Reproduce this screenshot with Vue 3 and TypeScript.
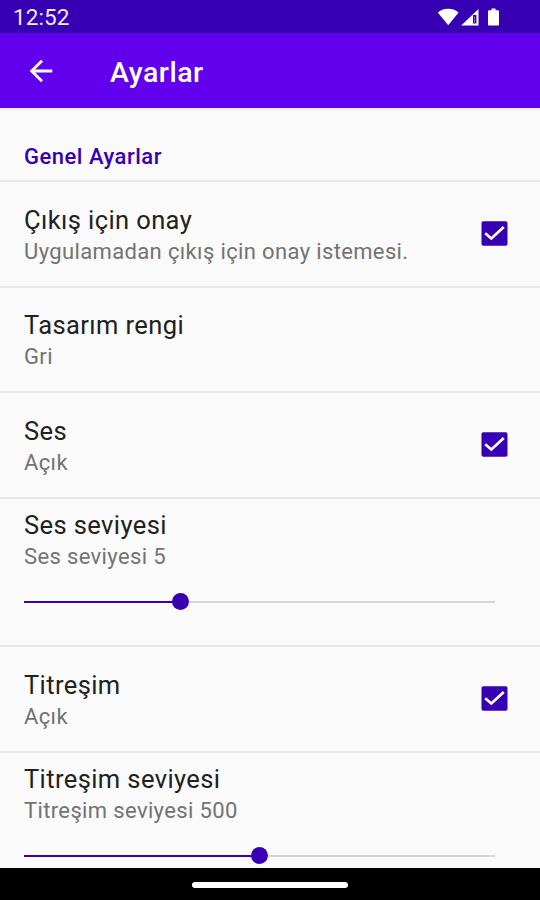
<script setup lang="ts">
import { ref } from 'vue'

interface Setting {
  id: string
  title: string
  summary: string
  kind: 'check' | 'plain' | 'slider'
  checked?: boolean
  percent?: number
}

const settings = ref<Setting[]>([
  { id: 'exit', title: 'Çıkış için onay', summary: 'Uygulamadan çıkış için onay istemesi.', kind: 'check', checked: true },
  { id: 'color', title: 'Tasarım rengi', summary: 'Gri', kind: 'plain' },
  { id: 'sound', title: 'Ses', summary: 'Açık', kind: 'check', checked: true },
  { id: 'volume', title: 'Ses seviyesi', summary: 'Ses seviyesi 5', kind: 'slider', percent: 33.3 },
  { id: 'vibration', title: 'Titreşim', summary: 'Açık', kind: 'check', checked: true },
  { id: 'strength', title: 'Titreşim seviyesi', summary: 'Titreşim seviyesi 500', kind: 'slider', percent: 50 },
])

function toggle(item: Setting) {
  if (item.kind === 'check') item.checked = !item.checked
}
</script>

<template>
  <div class="screen">
    <div class="status">
      <span class="clock">12:52</span>
      <svg class="status-icons" width="64" height="20" viewBox="0 0 64 20">
        <path d="M0.800 4.400C4 1.700 7.500 0.800 11.200 0.800S18.400 1.700 21.600 4.400L11.200 17.300Z" fill="#fff" />
        <path d="M41.500 1V17.600H24.200Z" fill="#fff" />
        <path d="M36 7H39.400V15.500H36Z" fill="#3700b3" />
        <path d="M37.500 8.500V14.800" stroke="#9c84dc" stroke-width="0.800" />
        <path d="M54.500 0.500H58.500V2.200H61Q62 2.200 62 3.200V16.600Q62 17.600 61 17.600H52Q51 17.600 51 16.600V3.200Q51 2.200 52 2.200H54.500Z" fill="#fff" />
      </svg>
    </div>
    <header class="appbar">
      <svg class="back" width="34" height="34" viewBox="0 0 24 24">
        <path d="M20 11H7.830l5.590-5.590L12 4l-8 8 8 8 1.410-1.410L7.830 13H20v-2z" fill="#fff" />
      </svg>
      <h1>Ayarlar</h1>
    </header>
    <main class="list">
      <h2 class="category">Genel Ayarlar</h2>
      <section v-for="item in settings" :key="item.id" class="row" :class="item.kind" @click="toggle(item)">
        <div class="texts">
          <div class="title">{{ item.title }}</div>
          <div class="summary">{{ item.summary }}</div>
        </div>
        <svg v-if="item.kind === 'check'" class="box" width="27" height="25" viewBox="0 0 27 25">
          <rect x="0.500" y="0.300" width="26" height="24.400" rx="1.800" :fill="item.checked ? '#3700b3' : '#757575'" />
          <path v-if="item.checked" d="M4.200 12.200L10.300 17.500L22.800 6" fill="none" stroke="#fff" stroke-width="2.700" />
        </svg>
        <div v-if="item.kind === 'slider'" class="track">
          <div class="fill" :style="{ width: item.percent + '%' }"><i class="thumb"></i></div>
        </div>
      </section>
    </main>
    <footer class="nav"><div class="pill"></div></footer>
  </div>
</template>

<style>
body { margin: 0; overflow: hidden; }
</style>

<style scoped>
.screen {
  width: 540px;
  height: 900px;
  display: flex;
  flex-direction: column;
  background: #fafafa;
  font-family: Roboto, "Liberation Sans", sans-serif;
  overflow: hidden;
}
.status {
  height: 33px;
  flex: none;
  box-sizing: border-box;
  padding: 0 39px 0 13px;
  display: flex;
  align-items: center;
  justify-content: space-between;
  background: #3700b3;
  color: #fff;
}
.clock { font-size: 22.500px; line-height: 26px; padding-top: 1px; letter-spacing: 0.100px; opacity: 0.93; }
.status-icons { margin-top: 3px; }
.appbar {
  height: 75px;
  flex: none;
  display: flex;
  align-items: center;
  padding-left: 24px;
  background: #6200ee;
  color: #fff;
}
h1, h2 { margin: 0; font-weight: 500; }
h1 { font-size: 28.500px; line-height: 34px; letter-spacing: 0.500px; margin-left: 52px; padding-top: 4px; }
.list {
  flex: 1;
  min-height: 0;
  overflow: hidden;
  box-shadow: inset 0 4px 3px -2px #e9e9e9;
}
.category {
  box-sizing: border-box;
  height: 72.400px;
  padding: 35px 24px 0;
  font-size: 22px;
  line-height: 28px;
  letter-spacing: 0.500px;
  color: #3700b3;
}
.row {
  box-sizing: border-box;
  height: 105.500px;
  border-top: 2px solid #e8e8e8;
  padding: 0 32px 0 24px;
  display: flex;
  align-items: center;
  justify-content: space-between;
}
.texts { padding-top: 1.400px; }
.title { font-size: 25.500px; line-height: 33px; letter-spacing: 0.400px; color: #212121; white-space: nowrap; }
.summary { font-size: 22px; line-height: 29px; letter-spacing: 0.360px; color: #737373; white-space: nowrap; }
.box { margin-bottom: 2px; }
.row.slider {
  height: 148.500px;
  flex-direction: column;
  align-items: stretch;
  justify-content: flex-start;
  padding: 9px 45px 0 24px;
}
.track { height: 2px; margin-top: 29.600px; background: #d5d5d5; }
.fill { height: 2px; background: #3700b3; display: flex; align-items: center; justify-content: flex-end; }
.thumb { flex: none; width: 17px; height: 17px; margin-right: -8.500px; border-radius: 50%; background: #3700b3; }
.nav {
  height: 32px;
  flex: none;
  display: flex;
  align-items: center;
  justify-content: center;
  background: #000;
}
.pill { width: 156px; height: 6px; margin-top: 1px; border-radius: 3px; background: #fff; }
</style>
